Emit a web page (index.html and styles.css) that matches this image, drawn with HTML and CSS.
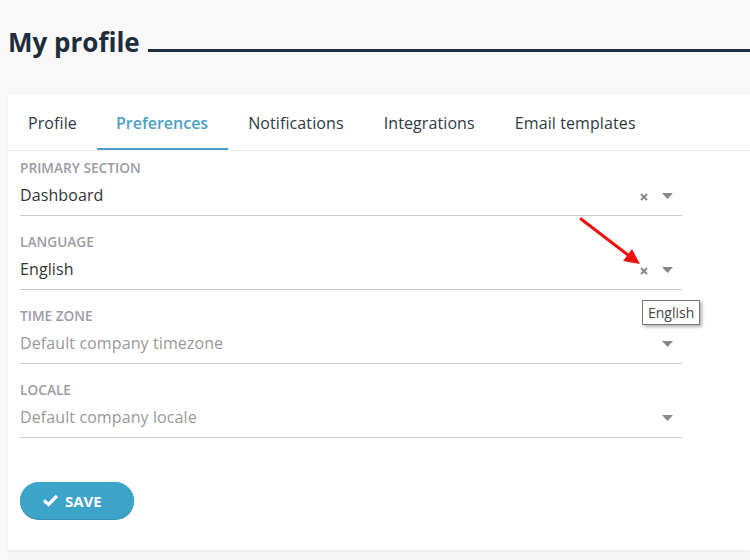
FILE: index.html
```html
<!DOCTYPE html>
<html lang="en">
  <head>
    <meta charset="UTF-8" />
    <meta name="viewport" content="width=device-width, initial-scale=1.0" />
    <title>My profile</title>
    <link rel="stylesheet" href="styles.css">
  </head>
  <body>
    <h1 class="page-title">My profile</h1>

    <div class="card">
      <ul class="tabs">
        <li>Profile</li>
        <li class="active">Preferences</li>
        <li>Notifications</li>
        <li>Integrations</li>
        <li>Email templates</li>
      </ul>

      <form class="prefs">
        <div class="field">
          <label>Primary section</label>
          <div class="select">
            <span class="value">Dashboard</span>
            <span class="clear"><svg width="8" height="8" viewBox="0 0 8 8"><path d="M1 1L7 7M7 1L1 7" /></svg></span>
            <span class="caret"><svg width="11" height="6" viewBox="0 0 11 6"><polygon points="0,0 11,0 5.5,6" /></svg></span>
          </div>
        </div>

        <div class="field">
          <label>Language</label>
          <div class="select">
            <span class="value">English</span>
            <span class="clear"><svg width="8" height="8" viewBox="0 0 8 8"><path d="M1 1L7 7M7 1L1 7" /></svg></span>
            <span class="caret"><svg width="11" height="6" viewBox="0 0 11 6"><polygon points="0,0 11,0 5.5,6" /></svg></span>
          </div>
          <div class="tooltip">English</div>
        </div>

        <div class="field">
          <label>Time zone</label>
          <div class="select">
            <span class="value placeholder">Default company timezone</span>
            <span class="caret"><svg width="11" height="6" viewBox="0 0 11 6"><polygon points="0,0 11,0 5.5,6" /></svg></span>
          </div>
        </div>

        <div class="field">
          <label>Locale</label>
          <div class="select">
            <span class="value placeholder">Default company locale</span>
            <span class="caret"><svg width="11" height="6" viewBox="0 0 11 6"><polygon points="0,0 11,0 5.5,6" /></svg></span>
          </div>
        </div>

        <button type="button" class="save-btn">
          <svg width="17" height="13" viewBox="0 0 17 13"><path d="M2 6.5L6.5 10.5L15 2" /></svg>
          Save
        </button>
      </form>
    </div>

    <!-- annotation arrow drawn over the screenshot -->
    <svg class="annotation" width="750" height="560" viewBox="0 0 750 560">
      <line x1="581" y1="219" x2="628" y2="255" />
      <polygon points="640,264 623,261 632,249" />
    </svg>
  </body>
</html>
```

FILE: styles.css
```css
body {
  margin: 0;
  padding: 0 0 0 8px;
  background: #f8f8f8;
  font-family: "Open Sans", sans-serif;
  color: #2f3a45;
  position: relative;
  overflow: hidden;
  height: 560px;
}

.page-title {
  display: flex;
  align-items: flex-end;
  margin: 24px 0 34px;
  font-size: 26px;
  line-height: 36px;
  font-weight: 700;
  color: #1e2d3b;
}

.page-title::after {
  content: "";
  flex: 1;
  height: 3px;
  margin: 0 0 8px 8px;
  background: #1e3040;
}

.card {
  background: #fff;
  box-shadow: 0 1px 3px rgba(0, 0, 0, 0.08);
  padding-bottom: 31px;
}

.tabs {
  display: flex;
  list-style: none;
  margin: 0;
  padding: 0;
  border-bottom: 1px solid #eee;
}

.tabs li {
  padding: 17px 20px 13px;
  font-size: 16px;
  line-height: 24px;
  letter-spacing: 0.1px;
  border-bottom: 2px solid transparent;
}

.tabs li.active {
  color: #4a9fc7;
  font-weight: 600;
  letter-spacing: 0;
  border-bottom-color: #4a9fc7;
  padding-left: 19px;
}

.prefs {
  padding: 8px 12px 0;
  width: 662px;
}

.field {
  position: relative;
  border-bottom: 1px solid #ccc;
  padding-bottom: 8px;
}

.field + .field {
  margin-top: 17px;
}

.field label {
  display: block;
  font-size: 13.7px;
  line-height: 18px;
  font-weight: 600;
  text-transform: uppercase;
  color: #9b9ba6;
}

.select {
  display: flex;
  align-items: center;
  margin-top: 6px;
  height: 24px;
}

.value {
  flex: 1;
  font-size: 16px;
  line-height: 24px;
  letter-spacing: 0.1px;
  color: #333;
}

.value.placeholder {
  color: #999;
}

.clear svg {
  display: block;
  stroke: #888;
  stroke-width: 2;
  margin-right: 14px;
  margin-top: 3px;
}

.caret svg {
  display: block;
  fill: #888;
  margin-right: 9px;
  margin-top: 2px;
}

.tooltip {
  position: absolute;
  left: 622px;
  top: 67px;
  padding: 2px 5px;
  background: #fff;
  border: 1px solid #777;
  box-shadow: 2px 2px 3px rgba(0, 0, 0, 0.3);
  font-size: 14px;
  line-height: 19px;
  color: #444;
}

.save-btn {
  display: flex;
  align-items: center;
  gap: 6px;
  margin-top: 44px;
  width: 114px;
  height: 37px;
  padding: 0 0 0 22px;
  border: none;
  border-radius: 19px;
  background: #3ca3c9;
  box-shadow: 0 1px 0 #3590b3;
  color: #fff;
  font-family: "Open Sans", sans-serif;
  font-size: 15px;
  font-weight: 700;
  text-transform: uppercase;
}

.save-btn svg {
  fill: none;
  stroke: #fff;
  stroke-width: 3.2;
}

.annotation {
  position: absolute;
  left: 0;
  top: 0;
  pointer-events: none;
}

.annotation line {
  stroke: #f01010;
  stroke-width: 3;
  stroke-linecap: round;
}

.annotation polygon {
  fill: #f01010;
}
```
